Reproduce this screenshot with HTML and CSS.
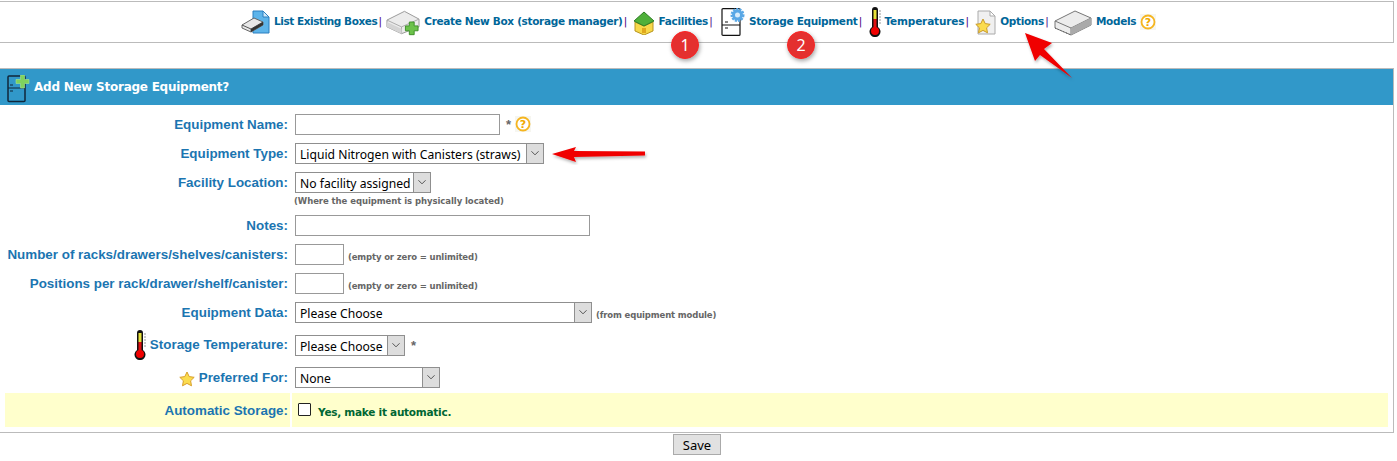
FILE: index.html
```html
<!DOCTYPE html>
<html lang="en">
<head>
<meta charset="utf-8">
<title>Add New Storage Equipment</title>
<link rel="stylesheet" href="styles.css">
</head>
<body>
<div class="page">
  <nav class="nav">
    <svg class="ic ic-list" viewBox="0 0 30 24"><path d="M12 1h10l6 6v16H12z" fill="#5db4ea" stroke="#2a7fc0"/><path d="M22 1v6h6z" fill="#cfe9fa" stroke="#2a7fc0"/><path d="M1 15l12-7 9 4v3L10 22 1 18z" fill="#e8e8e8" stroke="#666"/><path d="M1 15l9 4 12-7M10 19v3" fill="none" stroke="#555"/><path d="M10 19l12-7v3L10 22z" fill="#333"/></svg>
    <a class="lnk lnk-tight" href="#">List Existing Boxes</a><span class="sep sep-3">|</span>
    <svg class="ic ic-new" viewBox="0 0 35 26"><path d="M1 10L19 1l15 8v8L16 24 1 17z" fill="#ececec" stroke="#999"/><path d="M1 10l15 7 18-8M16 17v7" fill="none" stroke="#aaa"/><path d="M1 12l15 7v5L1 17z" fill="#d4d4d4"/><path d="M24 12h5v4h4v5h-4v4h-5v-4h-4v-5h4z" fill="#6cc24a" stroke="#3f8f2a"/></svg>
    <a class="lnk" href="#">Create New Box (storage manager)</a><span class="sep">|</span>
    <svg class="ic ic-house" viewBox="0 0 22 24"><path d="M2 11l9 4 9-4v9l-9 4-9-4z" fill="#f7d84a" stroke="#b8951e"/><path d="M1 10l10-9 10 9-10 5z" fill="#4fb03a" stroke="#2c7d22"/><path d="M9 22v-5h4v5z" fill="#e0a81e"/></svg>
    <a class="lnk" href="#">Facilities</a><span class="sep sep-7">|</span>
    <svg class="ic ic-fridge" viewBox="0 0 24 28"><rect x="1" y=".6" width="18" height="26.800" rx="1" fill="#fff" stroke="#111" stroke-width="1.200"/><path d="M1 17h18M4 14h3M4 20h3" stroke="#111" stroke-width="1.200"/><circle cx="16.500" cy="7" r="5.500" fill="#5aa8e6" stroke="#5aa8e6" stroke-dasharray="2 1" stroke-width="3"/><circle cx="16.500" cy="7" r="2.500" fill="#d8ecfb"/></svg>
    <a class="lnk" href="#">Storage Equipment</a><span class="sep sep-5">|</span>
    <svg class="ic ic-temp" viewBox="0 0 12 30"><path d="M3 3a3 3 0 0 1 6 0v17a5.500 5.500 0 1 1-6 0z" fill="#111"/><rect x="4.500" y="3" width="3" height="9" fill="#e8e23a"/><rect x="4.500" y="12" width="3" height="10" fill="#e01010"/><circle cx="6" cy="24" r="4" fill="#f00000"/><path d="M10 4h2M10 7h2M10 10h2M10 13h2M10 16h2" stroke="#999"/></svg>
    <a class="lnk lnk-loose" href="#">Temperatures</a><span class="sep sep-5">|</span>
    <svg class="ic ic-opt" viewBox="0 0 21 25"><path d="M3 1h12l5 5v18H3z" fill="#f0f0f0" stroke="#aaa"/><path d="M15 1v5h5z" fill="#fff" stroke="#aaa"/><path d="M8 9l2.200 4.600 5 .7-3.600 3.500.9 5L8 20.400 3.500 22.800l.9-5L.8 14.300l5-.7z" fill="#fbdc4e" stroke="#c99a2a"/></svg>
    <a class="lnk" href="#">Options</a><span class="sep">|</span>
    <svg class="ic ic-box" viewBox="0 0 38 26"><path d="M1 11L21 1l16 7v7L17 25 1 18z" fill="#ececec" stroke="#777"/><path d="M1 11l16 7 20-10M17 18v7" fill="none" stroke="#777"/><path d="M17 18l20-10v7L17 25z" fill="#aaa"/><path d="M1 18l16 7" fill="none" stroke="#555" stroke-dasharray="1 2"/></svg>
    <a class="lnk" href="#">Models</a>
    <svg class="ic ic-help" viewBox="0 0 16 16"><rect width="16" height="16" fill="#f6f6f0"/><circle cx="8" cy="8" r="6.500" fill="#fff" stroke="#f5b520" stroke-width="1.800"/><text x="8" y="12" class="help-q">?</text></svg>
  </nav>

  <main class="panel">
    <h1 class="head">
      <svg class="head-ic" viewBox="0 0 23 28"><rect x="1" y="1" width="17" height="25.500" rx="1" fill="none" stroke="#10263a" stroke-width="1.500"/><path d="M1 13h17M3 10h3M3 16h3" stroke="#10263a" stroke-width="1.200"/><path d="M13.500 0h4v4.500H22v4h-4.500V13h-4V8.500H9v-4h4.500z" fill="#7fd35e" stroke="#a8e68e" stroke-width=".6"/></svg>
      Add New Storage Equipment?
    </h1>
    <form class="form">
      <div class="row">
        <label class="lab">Equipment Name:</label>
        <div class="fld"><input class="inp w-name" type="text"><span class="star">*</span>
          <svg class="ic-help2" viewBox="0 0 16 16"><rect width="16" height="16" fill="#f6f6f0"/><circle cx="8" cy="8" r="6.500" fill="#fff" stroke="#f5b520" stroke-width="1.800"/><text x="8" y="12" class="help-q">?</text></svg>
        </div>
      </div>
      <div class="row">
        <label class="lab">Equipment Type:</label>
        <div class="fld"><span class="sel w-type"><select><option>Liquid Nitrogen with Canisters (straws)</option></select><svg class="chev" viewBox="0 0 18 21"><path d="M5 8l4 4 4-4" fill="none" stroke="#444"/></svg></span></div>
      </div>
      <div class="row row-hint">
        <label class="lab">Facility Location:</label>
        <div class="fld fld-col"><span class="sel w-fac"><select><option>No facility assigned</option></select><svg class="chev" viewBox="0 0 18 21"><path d="M5 8l4 4 4-4" fill="none" stroke="#444"/></svg></span>
          <small class="hint hint-under">(Where the equipment is physically located)</small></div>
      </div>
      <div class="row">
        <label class="lab">Notes:</label>
        <div class="fld"><input class="inp w-notes" type="text"></div>
      </div>
      <div class="row">
        <label class="lab">Number of racks/drawers/shelves/canisters:</label>
        <div class="fld"><input class="inp w-num" type="text"><small class="hint">(empty or zero = unlimited)</small></div>
      </div>
      <div class="row">
        <label class="lab">Positions per rack/drawer/shelf/canister:</label>
        <div class="fld"><input class="inp w-num" type="text"><small class="hint">(empty or zero = unlimited)</small></div>
      </div>
      <div class="row">
        <label class="lab">Equipment Data:</label>
        <div class="fld"><span class="sel w-data"><select><option>Please Choose</option></select><svg class="chev" viewBox="0 0 18 21"><path d="M5 8l4 4 4-4" fill="none" stroke="#444"/></svg></span><small class="hint">(from equipment module)</small></div>
      </div>
      <div class="row row-temp">
        <label class="lab lab-ic"><svg class="lab-temp" viewBox="0 0 12 30"><path d="M3 3a3 3 0 0 1 6 0v17a5.500 5.500 0 1 1-6 0z" fill="#111"/><rect x="4.500" y="3" width="3" height="9" fill="#e8e23a"/><rect x="4.500" y="12" width="3" height="10" fill="#e01010"/><circle cx="6" cy="24" r="4" fill="#f00000"/><path d="M10 4h2M10 7h2M10 10h2M10 13h2M10 16h2" stroke="#999"/></svg>Storage Temperature:</label>
        <div class="fld"><span class="sel w-temp"><select><option>Please Choose</option></select><svg class="chev" viewBox="0 0 18 21"><path d="M5 8l4 4 4-4" fill="none" stroke="#444"/></svg></span><span class="star">*</span></div>
      </div>
      <div class="row row-pref">
        <label class="lab lab-ic"><svg class="lab-star" viewBox="0 0 16 16"><path d="M8 1l2.200 4.600 5 .7-3.600 3.500.9 5L8 12.400 3.500 14.800l.9-5L.8 6.300l5-.7z" fill="#fbdc4e" stroke="#d9a02c"/></svg>Preferred For:</label>
        <div class="fld"><span class="sel w-pref"><select><option>None</option></select><svg class="chev" viewBox="0 0 18 21"><path d="M5 8l4 4 4-4" fill="none" stroke="#444"/></svg></span></div>
      </div>
      <div class="row row-auto">
        <label class="lab">Automatic Storage:</label>
        <div class="fld"><input class="chk" type="checkbox"><span class="yes">Yes, make it automatic.</span></div>
      </div>
    </form>
  </main>
  <div class="actions"><button class="save" type="button">Save</button></div>

  <span class="badge badge-1">1</span>
  <span class="badge badge-2">2</span>
  <svg class="arrows" viewBox="0 0 1397 461">
    <defs><filter id="ds" x="-20%" y="-20%" width="140%" height="140%"><feDropShadow dx="1" dy="2" stdDeviation="1.500" flood-color="#000" flood-opacity=".3"/></filter></defs>
    <path d="M552 154l24-7-2 4 71 .5v4l-71 1.500 2 5z" fill="#f00000" filter="url(#ds)"/>
    <path d="M1025 33l27 10-8 6 28 29-32-23-5 6z" fill="#f00000" filter="url(#ds)"/>
  </svg>
</div>
</body>
</html>
```
FILE: styles.css
```css
* { box-sizing: border-box; }
html, body { margin: 0; padding: 0; background: #fff; }
.page { position: relative; width: 1394px; height: 461px; padding-top: 1px; font-family: "Liberation Sans", Arial, sans-serif; overflow: hidden; }

.nav { height: 42px; border: 1px solid #bbb; border-left: 0; display: flex; align-items: center; padding: 0 0 1px 241px; font-family: "DejaVu Sans", Verdana, sans-serif; font-size: 10.5px; font-weight: 700; white-space: nowrap; }
.lnk { color: #006699; text-decoration: none; letter-spacing: -0.33px; margin-bottom: 2px; }
.lnk-tight { letter-spacing: -0.44px; }
.lnk-loose { letter-spacing: -0.17px; }
.sep { color: #4b0082; font-weight: 400; width: 6px; text-align: center; margin: 0 4px 2px 0; }
.sep-3 { margin-right: 3px; }
.sep-5 { margin-right: 5px; }
.sep-7 { margin-right: 7px; }
.ic { flex: none; margin-right: 4px; }
.ic-list { width: 30px; height: 24px; margin-right: 3px; }
.ic-new { width: 34px; height: 26px; margin-top: 2px; }
.ic-house { width: 22px; height: 24px; margin-top: 2px; }
.ic-fridge { width: 24px; height: 28px; }
.ic-temp { width: 12px; height: 30px; margin-top: 1px; }
.ic-opt { width: 21px; height: 25px; margin-top: 1px; }
.ic-box { width: 38px; height: 26px; margin-top: 2px; }
.ic-help { width: 16px; height: 16px; margin: 0 0 0 4px; }
.help-q { font: 700 11px "DejaVu Sans", sans-serif; fill: #f0a800; text-anchor: middle; }

.panel { margin-top: 25px; height: 365px; border: 1px solid #bbb; border-width: 1px 1px 1px 0; }
.head { margin: 0; height: 36px; background: #3198c9; color: #fff; font-family: "DejaVu Sans", Verdana, sans-serif; font-size: 12px; font-weight: 700; display: flex; align-items: center; padding-left: 7px; letter-spacing: -0.25px; }
.head-ic { width: 23px; height: 28px; margin: 3px 4px 0 0; flex: none; }

.form { padding: 5px 5px 0; display: flex; flex-direction: column; }
.row { display: grid; grid-template-columns: 285px 1fr; column-gap: 2px; height: 29px; }
.lab { color: #1b75b1; font-size: 13.4px; font-weight: 700; text-align: right; padding: 6px 2px 0 0; line-height: 18px; white-space: nowrap; }
.fld { padding: 4px 0 0 3px; display: flex; align-items: flex-start; }
.fld-col { flex-direction: column; }
.row-hint { height: 43px; }
.row-temp { height: 35px; }
.row-temp .fld { padding-top: 8px; }
.row-temp .lab { padding-top: 9px; }
.row-pref { height: 31px; }
.row-pref .fld { padding-top: 5px; }
.row-pref .lab { padding-top: 7px; }
.row-auto { height: 34px; background: linear-gradient(to right, #ffffcc 285px, #fff 285px, #fff 287px, #ffffcc 287px); }
.row-auto .lab { padding-top: 9px; }
.row-auto .fld { padding-top: 10px; }
.lab-ic { display: flex; justify-content: flex-end; align-items: flex-start; gap: 4px; }
.lab-temp { width: 12px; height: 30px; margin-top: -6px; }
.lab-star { width: 16px; height: 16px; margin-top: 2px; }

.inp { height: 21px; border: 1px solid #999; background: #fff; padding: 1px 3px; margin: 0; font: 13px "Liberation Sans", sans-serif; }
.w-name { width: 205px; }
.w-notes { width: 295px; }
.w-num { width: 49px; }
.star { color: #666; font-size: 13px; font-weight: 700; margin: 3px 0 0 6px; }
.ic-help2 { width: 16px; height: 16px; margin: 2px 0 0 4px; }

.sel { position: relative; display: block; height: 21px; flex: none; }
.sel select { appearance: none; -webkit-appearance: none; display: block; width: 100%; height: 21px; border: 1px solid #8f8f8f; border-radius: 0; background: #fff; padding: 1px 0 0 4px; margin: 0; font: 12.15px "Noto Sans", "Liberation Sans", sans-serif; color: #000; }
.chev { position: absolute; right: 0; top: 0; width: 18px; height: 21px; background: #ddd; border: 1px solid #8f8f8f; pointer-events: none; }
.w-type { width: 249px; }
.w-fac { width: 136px; }
.w-data { width: 297px; }
.w-temp { width: 110px; }
.w-pref { width: 145px; }

.hint { color: #666; font-family: "DejaVu Sans", Verdana, sans-serif; font-size: 8.5px; font-weight: 700; margin: 8px 0 0 4px; letter-spacing: -0.14px; white-space: nowrap; }
.hint-under { margin: 3px 0 0 -1px; letter-spacing: -0.06px; }

.chk { appearance: none; -webkit-appearance: none; width: 13px; height: 13px; border: 1px solid #222; border-radius: 1px; background: #fff; margin: 0 0 0 3px; flex: none; }
.yes { color: #006633; font-family: "DejaVu Sans", Verdana, sans-serif; font-size: 10.5px; font-weight: 700; margin: 3px 0 0 7px; letter-spacing: -0.26px; }

.actions { display: flex; justify-content: center; padding-top: 1px; }
.save { width: 48px; height: 21px; background: #e1e1e1; border: 1px solid #aaa; padding: 0; font: 13px "Noto Sans", "Liberation Sans", sans-serif; color: #000; }

.badge { position: absolute; top: 31px; width: 28px; height: 28px; border-radius: 50%; background: #e4302f; border: 1px solid #f22; color: #fff; font: 16px/26px "Noto Sans", sans-serif; text-align: center; box-shadow: 1px 2px 4px rgba(0,0,0,.35); }
.badge-1 { left: 671px; }
.badge-2 { left: 787px; }
.arrows { position: absolute; left: 0; top: 0; width: 1397px; height: 461px; pointer-events: none; }
```
